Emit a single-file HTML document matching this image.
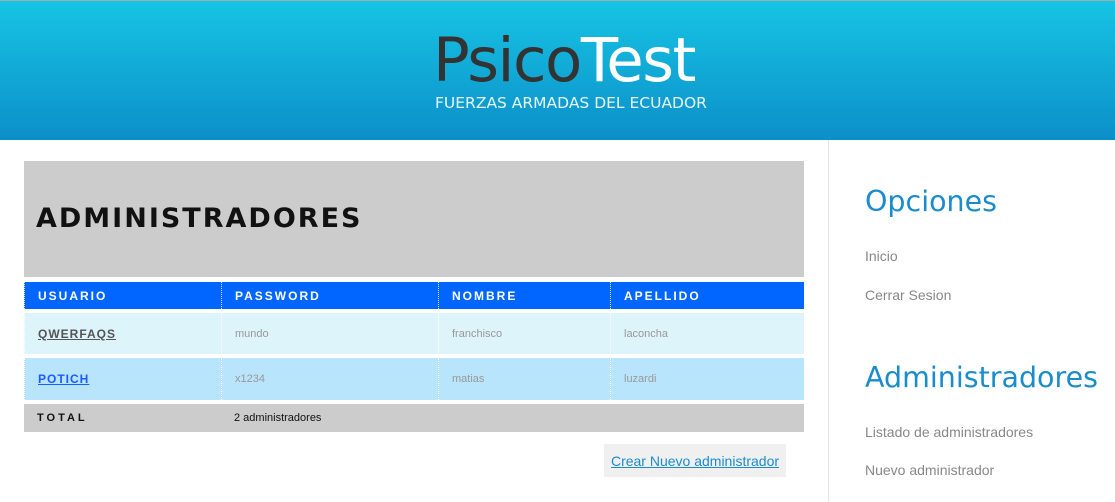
<!DOCTYPE html>
<html><head><style>
body{margin:0;width:1115px;height:502px;overflow:hidden;background:#fff;font-family:"Liberation Sans",sans-serif;position:relative}
.hd{position:absolute;left:0;top:0;width:1115px;height:140px;border-top:1px solid #aaa;box-sizing:border-box;background:linear-gradient(#17c4e3,#0c8fca)}
.logo{position:absolute;left:433px;top:22px;font-family:"DejaVu Sans",sans-serif;font-size:61px;line-height:76px;color:#333;letter-spacing:-1.5px}
.logo span{color:#fff}
.sub{position:absolute;left:435px;top:93px;font-family:"DejaVu Sans",sans-serif;font-size:15.5px;color:#e8f6fb;letter-spacing:0}
.side{position:absolute;left:828px;top:140px;width:287px;height:362px;border-left:1px solid #e6e6e6}
.side h2{position:absolute;left:36px;margin:0;font-family:"DejaVu Sans",sans-serif;font-weight:normal;color:#1a8ccc;font-size:28.5px}
.side a{position:absolute;left:36px;color:#888;font-size:14px;text-decoration:none}
.title{position:absolute;left:24px;top:161px;width:780px;height:116px;background:#ccc}
.title b{position:absolute;left:12px;top:42px;font-family:"DejaVu Sans",sans-serif;font-size:27px;letter-spacing:2px;color:#111}
.row{position:absolute;left:24px;width:780px}
.c{position:absolute;top:0;bottom:0;box-sizing:border-box;padding-left:13px;display:flex;align-items:center;font-size:11px;color:#999}
.h .c{color:#fff;font-weight:bold;font-size:12px;letter-spacing:2px;border-left:1px dotted #ddd}
.d .c{border-left:1px dotted #fff}
</style></head><body>
<div class="hd"><div class="logo">Psico<span>Test</span></div><div class="sub">FUERZAS ARMADAS DEL ECUADOR</div></div>
<div class="title"><b>ADMINISTRADORES</b></div>
<div class="row h" style="top:282px;height:27px;background:#0066ff">
<div class="c" style="left:0;width:197px">USUARIO</div><div class="c" style="left:197px;width:217px">PASSWORD</div><div class="c" style="left:414px;width:172px">NOMBRE</div><div class="c" style="left:586px;width:194px">APELLIDO</div></div>
<div class="row d" style="top:313px;height:41px;background:#dcf4fa">
<div class="c" style="left:0;width:197px"><a style="color:#555;font-weight:bold;font-size:12px;letter-spacing:1px;text-decoration:underline">QWERFAQS</a></div><div class="c" style="left:197px;width:217px">mundo</div><div class="c" style="left:414px;width:172px">franchisco</div><div class="c" style="left:586px;width:194px">laconcha</div></div>
<div class="row d" style="top:358px;height:42px;background:#b8e4fc">
<div class="c" style="left:0;width:197px"><a style="color:#1a5cff;font-weight:bold;font-size:12px;letter-spacing:1px;text-decoration:underline">POTICH</a></div><div class="c" style="left:197px;width:217px">x1234</div><div class="c" style="left:414px;width:172px">matias</div><div class="c" style="left:586px;width:194px">luzardi</div></div>
<div class="row" style="top:404px;height:28px;background:#ccc">
<div class="c" style="left:0;width:197px;color:#111;font-weight:bold;letter-spacing:3px">TOTAL</div><div class="c" style="left:197px;width:217px;color:#111">2 administradores</div></div>
<div style="position:absolute;left:604px;top:444px;width:182px;height:33px;background:#f0f0f0;display:flex;align-items:center;justify-content:center"><a style="color:#1a8ccc;font-size:14px;text-decoration:underline">Crear Nuevo administrador</a></div>
<div class="side">
<h2 style="top:45px">Opciones</h2>
<a style="top:108px">Inicio</a>
<a style="top:147px">Cerrar Sesion</a>
<h2 style="top:221px">Administradores</h2>
<a style="top:284px">Listado de administradores</a>
<a style="top:322px">Nuevo administrador</a>
</div>
</body></html>
